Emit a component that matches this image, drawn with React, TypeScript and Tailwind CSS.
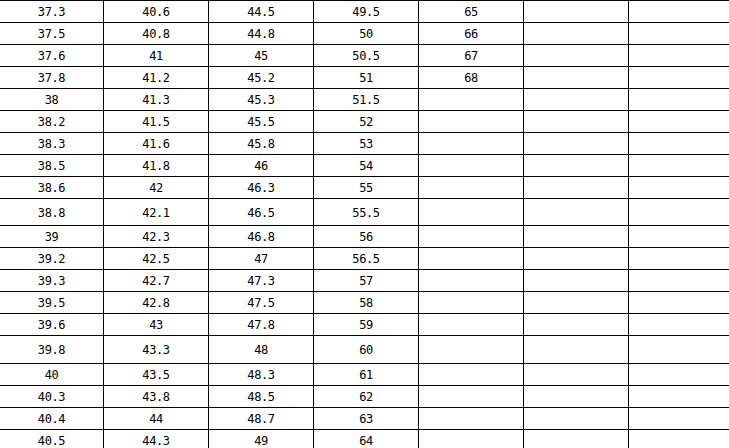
import React from 'react';

const rows: { cells: string[]; h: string }[] = [
  { cells: ['37.3', '40.6', '44.5', '49.5', '65'], h: 'h-[21px]' },
  { cells: ['37.5', '40.8', '44.8', '50', '66'], h: 'h-[21px]' },
  { cells: ['37.6', '41', '45', '50.5', '67'], h: 'h-[21px]' },
  { cells: ['37.8', '41.2', '45.2', '51', '68'], h: 'h-[21px]' },
  { cells: ['38', '41.3', '45.3', '51.5', ''], h: 'h-[21px]' },
  { cells: ['38.2', '41.5', '45.5', '52', ''], h: 'h-[21px]' },
  { cells: ['38.3', '41.6', '45.8', '53', ''], h: 'h-[21px]' },
  { cells: ['38.5', '41.8', '46', '54', ''], h: 'h-[21px]' },
  { cells: ['38.6', '42', '46.3', '55', ''], h: 'h-[21px]' },
  { cells: ['38.8', '42.1', '46.5', '55.5', ''], h: 'h-[26px]' },
  { cells: ['39', '42.3', '46.8', '56', ''], h: 'h-[21px]' },
  { cells: ['39.2', '42.5', '47', '56.5', ''], h: 'h-[21px]' },
  { cells: ['39.3', '42.7', '47.3', '57', ''], h: 'h-[21px]' },
  { cells: ['39.5', '42.8', '47.5', '58', ''], h: 'h-[21px]' },
  { cells: ['39.6', '43', '47.8', '59', ''], h: 'h-[21px]' },
  { cells: ['39.8', '43.3', '48', '60', ''], h: 'h-[27px]' },
  { cells: ['40', '43.5', '48.3', '61', ''], h: 'h-[21px]' },
  { cells: ['40.3', '43.8', '48.5', '62', ''], h: 'h-[21px]' },
  { cells: ['40.4', '44', '48.7', '63', ''], h: 'h-[21px]' },
  { cells: ['40.5', '44.3', '49', '64', ''], h: 'h-[21px]' },
];

const Cell = ({ text, first }: { text: string; first?: boolean }) => (
  <div
    className={`${first ? 'w-[104px]' : 'w-[105px]'} shrink-0 border-r border-black flex items-center justify-center pt-[1px]`}
  >
    {text}
  </div>
);

export default function App() {
  return (
    <div className="w-[729px] h-[448px] overflow-hidden bg-white text-black">
      <div
        className="border-t border-black text-[12px] tracking-[-0.4px] leading-none"
        style={{ fontFamily: '"DejaVu Sans Mono", "Liberation Mono", monospace' }}
      >
        {rows.map((r, i) => (
          <div key={i} className={`flex border-b border-black box-content ${r.h}`}>
            <Cell text={r.cells[0]} first />
            <Cell text={r.cells[1]} />
            <Cell text={r.cells[2]} />
            <Cell text={r.cells[3]} />
            <Cell text={r.cells[4]} />
            <Cell text="" />
            <div className="flex-1" />
          </div>
        ))}
      </div>
    </div>
  );
}
